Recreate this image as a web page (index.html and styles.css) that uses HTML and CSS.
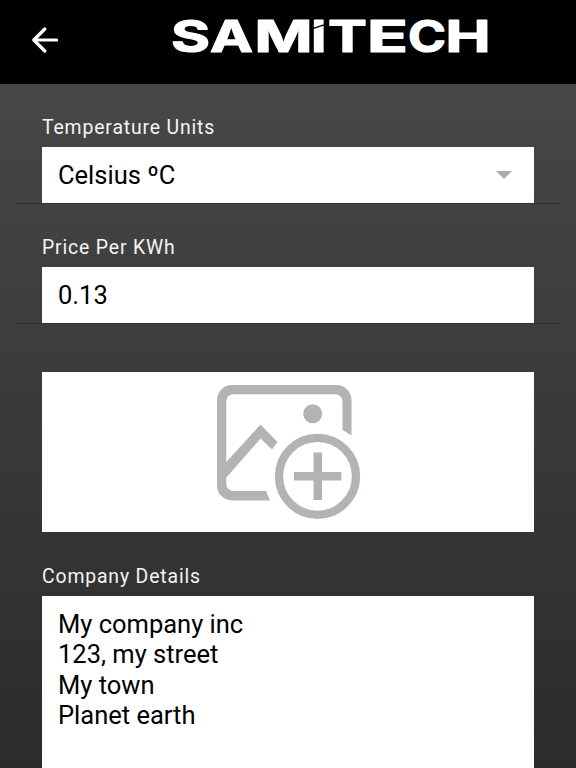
FILE: index.html
```html
<!doctype html>
<html lang="en">
  <head>
    <meta charset="UTF-8" />
    <meta name="viewport" content="width=device-width, initial-scale=1.0" />
    <title>Samitech - Settings</title>
    <link rel="stylesheet" href="styles.css">
  </head>
  <body>
    <header class="toolbar">
      <button class="back" aria-label="Back">
        <svg width="26" height="26" viewBox="0 0 26 26">
          <path d="M24.6 13H2M12.8 2 1.8 13l11 11" />
        </svg>
      </button>
      <svg class="logo" width="350" height="66" viewBox="0 0 350 66">
        <text y="51.9"><tspan x="-1" textLength="39" lengthAdjust="spacingAndGlyphs">S</tspan><tspan x="38" textLength="43" lengthAdjust="spacingAndGlyphs">A</tspan><tspan x="82.500" textLength="58" lengthAdjust="spacingAndGlyphs">M</tspan><tspan x="139" textLength="15.500" lengthAdjust="spacingAndGlyphs">i</tspan><tspan x="156" textLength="39" lengthAdjust="spacingAndGlyphs">T</tspan><tspan x="195" textLength="41" lengthAdjust="spacingAndGlyphs">E</tspan><tspan x="236" textLength="38" lengthAdjust="spacingAndGlyphs">C</tspan><tspan x="273.500" textLength="45" lengthAdjust="spacingAndGlyphs">H</tspan></text>
        <path class="logo-cut" d="M140 28.800 155 23.800" />
      </svg>
    </header>

    <main class="settings">
      <section class="field">
        <label class="label" for="units">Temperature Units</label>
        <div class="box select" id="units" tabindex="0">
          <span>Celsius ºC</span>
          <span class="caret"></span>
        </div>
      </section>

      <section class="field">
        <label class="label" for="price">Price Per KWh</label>
        <div class="box" id="price">0.13</div>
      </section>

      <section class="field picture">
        <div class="box upload">
          <svg width="144" height="136" viewBox="0 0 144 136">
            <g class="solid">
              <path d="M15 0H119.500A15 15 0 0 1 134.500 15V50.500L125.500 45V16A7 7 0 0 0 118.500 9.300H16A7 7 0 0 0 9.300 16V77L43.500 39.500 60.500 57 55 64.500 43.500 53.500 9.300 92.500V99A7 7 0 0 0 16 106H49L53 115.500H15A15 15 0 0 1 0 100.500V15A15 15 0 0 1 15 0Z" />
              <circle cx="95.700" cy="28.800" r="9.500" />
              <path d="M96.500 67.500h8.500v19.500h19.300v8.500h-19.300v19.500h-8.500v-19.500H77v-8.500h19.500Z" />
            </g>
            <circle class="ring" cx="100.500" cy="91.300" r="38.500" />
          </svg>
        </div>
      </section>

      <section class="field">
        <label class="label" for="company">Company Details</label>
        <div class="box details" id="company">My company inc
123, my street
My town
Planet earth</div>
      </section>
    </main>
  </body>
</html>
```

FILE: styles.css
```css
* {
  box-sizing: border-box;
}

body {
  display: flex;
  flex-direction: column;
  height: 100vh;
  margin: 0;
  overflow: hidden;
  font-family: Roboto, sans-serif;
  font-size: 25.5px;
  line-height: 30.4px;
  color: #000;
  background: linear-gradient(#484748 84px, #2b2b2b 768px);
}

.toolbar {
  display: flex;
  flex: none;
  align-items: flex-start;
  height: 84px;
  padding: 0 0 0 32px;
  background: #000;
}

.back {
  width: 26px;
  height: 26px;
  margin: 27px 114px 0 0;
  padding: 0;
  border: 0;
  background: none;
}

.back svg {
  display: block;
  fill: none;
  stroke: #fff;
  stroke-width: 3.2;
  stroke-linecap: round;
  stroke-linejoin: round;
}

.logo {
  overflow: visible;
  font-family: Inter, sans-serif;
  font-size: 43.5px;
  font-weight: 700;
  text-transform: uppercase;
  fill: #fff;
}

.logo text {
  stroke: #fff;
  stroke-width: 1.2;
  stroke-linejoin: round;
}

.logo-cut {
  stroke: #000;
  stroke-width: 1.4;
}

.settings {
  padding: 0 16px;
}

.field {
  padding: 31px 26px 0;
  border-bottom: 1px solid #2f2f2f;
}

.label {
  display: block;
  height: 32px;
  font-size: 19.4px;
  line-height: 25px;
  letter-spacing: 0.85px;
  color: #f4f4f4;
}

.box {
  height: 56px;
  padding: 13px 16px;
  background: #fff;
}

.select {
  display: flex;
  justify-content: space-between;
  align-items: center;
}

.caret {
  margin-right: 6px;
  border: 8px solid transparent;
  border-top-color: #aaa;
  border-bottom: 0;
}

.field.picture {
  padding-top: 48px;
}

.upload {
  display: flex;
  justify-content: center;
  height: 160px;
  padding: 13px 0 0 2px;
}

.solid {
  fill: #b2b4b3;
}

.ring {
  fill: none;
  stroke: #b2b4b3;
  stroke-width: 8.3;
}

.details {
  height: 200px;
  white-space: pre-line;
}
```
